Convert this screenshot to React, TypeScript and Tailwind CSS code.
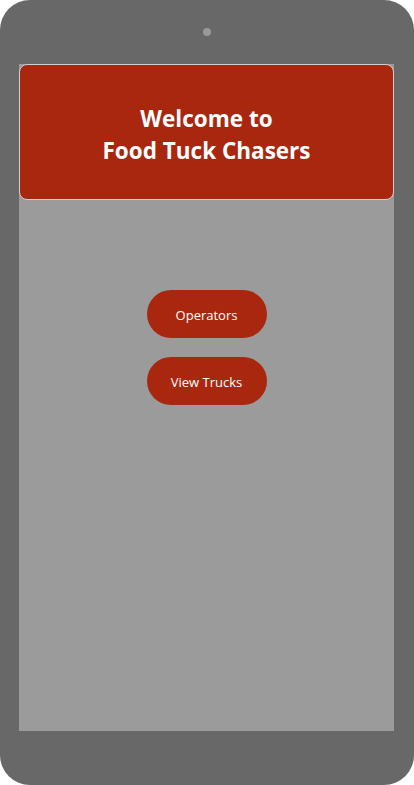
const App = () => {
  return (
    <div className="w-[414px] h-[785px] bg-white" style={{ fontFamily: '"Open Sans", "Noto Sans", sans-serif' }}>
      {/* Device frame */}
      <div className="w-full h-full bg-[#686868] rounded-[30px] flex flex-col">
        {/* Camera */}
        <div className="h-[64px] flex justify-center pt-[28px]">
          <div className="w-[8px] h-[8px] rounded-full bg-[#999999]" />
        </div>

        {/* Screen */}
        <div className="ml-[19px] w-[375px] h-[667px] bg-[#9b9b9b] flex flex-col">
          <header className="h-[136px] pt-[5px] bg-[#a9270f] border border-[#d0d0d0] rounded-lg flex items-center justify-center">
            <h1 className="text-white text-[22.5px] font-bold leading-[32px] text-center">
              Welcome to
              <br />
              Food Tuck Chasers
            </h1>
          </header>

          <div className="flex flex-col items-center gap-[19px] pt-[90px]">
            <button className="w-[120px] h-[48px] pt-[3px] rounded-full bg-[#a9270f] text-white text-[13px]">
              Operators
            </button>
            <button className="w-[120px] h-[48px] pt-[3px] rounded-full bg-[#a9270f] text-white text-[13px]">
              View Trucks
            </button>
          </div>
        </div>
      </div>
    </div>
  )
}

export default App
